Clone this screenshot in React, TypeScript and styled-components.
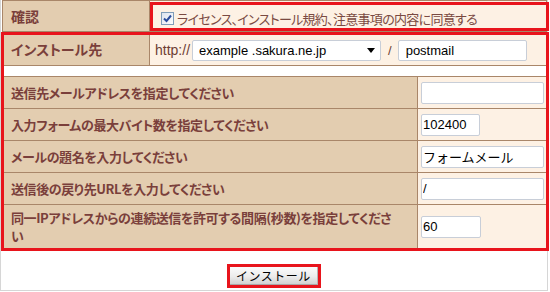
import React from 'react';
import styled, { createGlobalStyle } from 'styled-components';

const GlobalStyle = createGlobalStyle`
  html, body {
    margin: 0;
    padding: 0;
    background: #fff;
  }
  body {
    font-family: "Noto Sans CJK JP", "Liberation Sans", sans-serif;
  }
`;

const Frame = styled.div`
  width: 546px;
  height: 290px;
  border: 1px solid #d6d6d6;
  border-top: none;
  display: flex;
  flex-direction: column;
`;

const FormGrid = styled.div<{ $marked?: boolean; $rows: string }>`
  position: relative;
  box-sizing: border-box;
  width: 545px;
  margin-left: 1px;
  display: grid;
  grid-template-columns: 146px 267px 128px;
  grid-template-rows: ${(p) => p.$rows};
  gap: 1px;
  background: #a98669;
  border: 1px solid #a98669;

  ${(p) =>
    p.$marked &&
    `
    &::after {
      content: '';
      position: absolute;
      top: -1px;
      left: -2px;
      right: -3px;
      bottom: -3px;
      border: 3px solid #e8141c;
      pointer-events: none;
    }
  `}
`;

const Label = styled.div<{ $wide?: boolean; $large?: boolean }>`
  grid-column: ${(p) => (p.$wide ? '1 / 3' : '1')};
  display: flex;
  align-items: center;
  padding: 0 8px;
  background: #e3cdb0;
  color: #7a3f3b;
  font-weight: bold;
  font-size: ${(p) => (p.$large ? '14px' : '13px')};
  font-feature-settings: 'palt';
  letter-spacing: ${(p) => (p.$large ? '0' : '-0.4px')};
  line-height: 18px;
`;

const Value = styled.div<{ $span?: boolean; $marked?: boolean }>`
  position: relative;
  grid-column: ${(p) => (p.$span ? '2 / 4' : '3')};
  display: flex;
  align-items: center;
  padding-left: 3px;
  background: #fdf1e4;

  ${(p) =>
    p.$marked &&
    `
    &::after {
      content: '';
      position: absolute;
      top: 1px;
      left: 0;
      right: -3px;
      bottom: 0;
      border: 3px solid #e8141c;
      pointer-events: none;
    }
  `}
`;

const BlankRow = styled.div`
  grid-column: 1 / -1;
  background: #fff;
`;

const AgreeLine = styled.label`
  display: flex;
  align-items: center;
  gap: 3px;
  padding: 4px 0 0 8px;
  color: #7a4a42;
  font-size: 13px;
  font-feature-settings: 'palt';
  letter-spacing: -0.7px;
`;

const CheckBox = styled.span`
  box-sizing: border-box;
  width: 13px;
  height: 13px;
  display: inline-flex;
  align-items: center;
  justify-content: center;
  border: 1px solid #7f9db9;
  background: linear-gradient(135deg, #dde3ee, #fbfcfd);
`;

const HttpText = styled.span`
  margin: 2px 2px 0 2px;
  color: #6e3d33;
  font-family: 'Liberation Sans', sans-serif;
  font-size: 14px;
`;

const SelectBox = styled.div`
  box-sizing: border-box;
  width: 189px;
  height: 21px;
  margin-top: 3px;
  display: flex;
  align-items: center;
  justify-content: space-between;
  padding: 0 5px 0 6px;
  background: #fff;
  border: 1px solid #c8ced8;
  border-radius: 2px;
  font-family: 'Liberation Sans', sans-serif;
  font-size: 13px;
  color: #000;
`;

const Slash = styled.span`
  margin: 3px 6px 0 7px;
  color: #6e3d33;
  font-family: 'Liberation Sans', sans-serif;
  font-size: 13px;
`;

const TextInput = styled.input<{ $width: number; $pad?: number; $tall?: number; $drop?: number }>`
  box-sizing: border-box;
  width: ${(p) => p.$width}px;
  height: ${(p) => p.$tall ?? 22}px;
  margin: ${(p) => p.$drop ?? 0}px 0 0 0;
  padding: 0 ${(p) => p.$pad ?? 1}px;
  background: #fff;
  border: 1px solid #c8ced8;
  border-radius: 2px;
  outline: none;
  font-family: 'Liberation Sans', 'Noto Sans CJK JP', sans-serif;
  font-size: 13px;
  color: #000;
`;

const ButtonRow = styled.div`
  display: flex;
  justify-content: center;
  padding-top: 18px;
`;

const InstallButton = styled.button`
  box-sizing: border-box;
  width: 88px;
  height: 18px;
  padding: 0;
  border: none;
  border-right: 1px solid #b4b4b4;
  border-bottom: 1px solid #a8a8a8;
  background: linear-gradient(#fbfbfb, #ececec 55%, #d2d2d2);
  outline: 3px solid #e8141c;
  font-family: 'Noto Sans CJK JP', sans-serif;
  font-size: 12px;
  line-height: 16px;
  color: #000;
  letter-spacing: 0.5px;
`;

const settings = [
  { label: '送信先メールアドレスを指定してください', value: '', width: 123 },
  { label: '入力フォームの最大バイト数を指定してください', value: '102400', width: 59 },
  { label: 'メールの題名を入力してください', value: 'フォームメール', width: 123 },
  { label: '送信後の戻り先URLを入力してください', value: '/', width: 123 },
];

const App = () => {
  return (
    <>
      <GlobalStyle />
      <Frame>
        <FormGrid $rows='30px'>
          <Label $large>確認</Label>
          <Value $span $marked>
            <AgreeLine>
              <CheckBox role='checkbox' aria-checked='true'>
                <svg width='9' height='9' viewBox='0 0 9 9'>
                  <path d='M1 4.5 L3.5 7 L8 1.5' fill='none' stroke='#2b4c9c' strokeWidth='2' />
                </svg>
              </CheckBox>
              ライセンス、インストール規約、注意事項の内容に同意する
            </AgreeLine>
          </Value>
        </FormGrid>

        <FormGrid $marked $rows='32px 10px 31px 31px 31px 31px 43px'>
          <Label $large>インストール先</Label>
          <Value $span>
            <HttpText>http://</HttpText>
            <SelectBox>
              <span>example .sakura.ne.jp</span>
              <svg width='8' height='5' viewBox='0 0 8 5'>
                <polygon points='0,0 8,0 4,5' fill='#000' />
              </svg>
            </SelectBox>
            <Slash>/</Slash>
            <TextInput $width={129} $tall={21} $pad={7} $drop={3} readOnly value='postmail' />
          </Value>

          <BlankRow />

          {settings.map((s) => (
            <React.Fragment key={s.label}>
              <Label $wide>{s.label}</Label>
              <Value>
                <TextInput $width={s.width} readOnly value={s.value} />
              </Value>
            </React.Fragment>
          ))}

          <Label $wide>
            <span>
              同一IPアドレスからの連続送信を許可する間隔(秒数)を指定してくださ
              <br />い
            </span>
          </Label>
          <Value>
            <TextInput $width={60} readOnly value='60' />
          </Value>
        </FormGrid>

        <ButtonRow>
          <InstallButton type='button'>インストール</InstallButton>
        </ButtonRow>
      </Frame>
    </>
  );
};

export default App;
